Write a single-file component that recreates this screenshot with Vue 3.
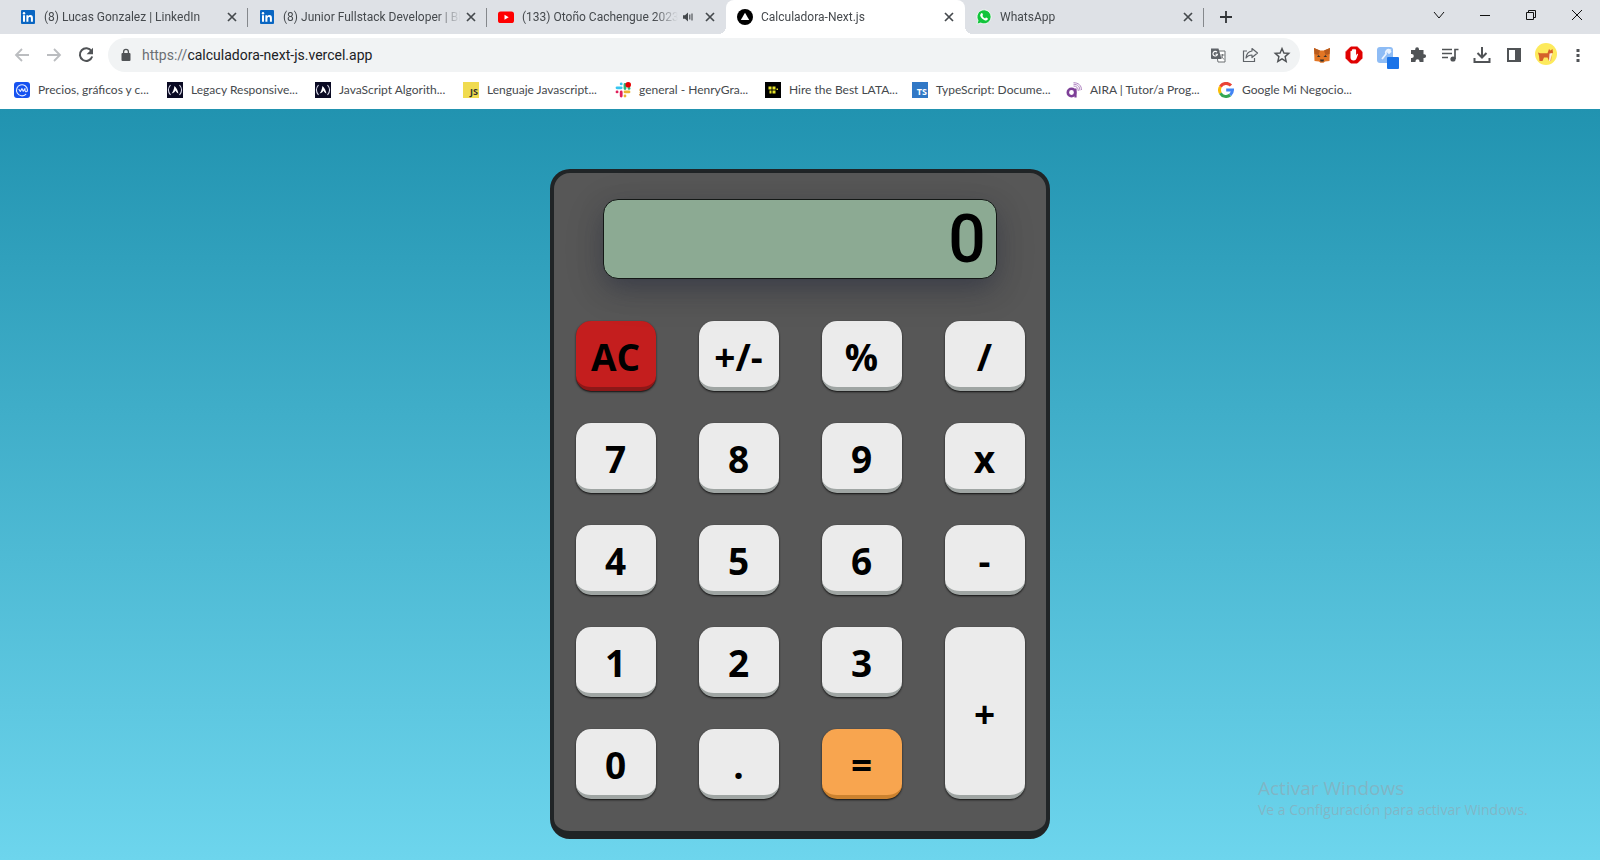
<script setup>
import { ref } from 'vue'

const tabs = [
  { icon: 'linkedin', title: '(8) Lucas Gonzalez | LinkedIn' },
  { icon: 'linkedin', title: '(8) Junior Fullstack Developer | Bl' },
  { icon: 'youtube', title: '(133) Otoño Cachengue 2023', audio: true },
  { icon: 'vercel', title: 'Calculadora-Next.js', active: true },
  { icon: 'whatsapp', title: 'WhatsApp' },
]

const bookmarks = [
  { icon: 'coinmarket', title: 'Precios, gráficos y c...' },
  { icon: 'fcc', title: 'Legacy Responsive...' },
  { icon: 'fcc', title: 'JavaScript Algorith...' },
  { badge: 'JS', title: 'Lenguaje Javascript...' },
  { icon: 'slack', title: 'general - HenryGra...' },
  { icon: 'hire', title: 'Hire the Best LATA...' },
  { badge: 'TS', title: 'TypeScript: Docume...' },
  { icon: 'aira', title: 'AIRA | Tutor/a Prog...' },
  { icon: 'google', title: 'Google Mi Negocio...' },
]

const keys = ['AC', '+/-', '%', '/', '7', '8', '9', 'x', '4', '5', '6', '-', '1', '2', '3', '+', '0', '.', '=']
const keyClass = { AC: 'clear', '+': 'plus', '=': 'equals' }

const display = ref('0')
const address = ref('calculadora-next-js.vercel.app')
let stored = null
let pending = null
let fresh = true

function compute(a, b, op) {
  if (op === '+') return a + b
  if (op === '-') return a - b
  if (op === 'x') return a * b
  return a / b
}

function press(key) {
  const value = Number(display.value)
  if (/^[0-9]$/.test(key)) {
    display.value = fresh || display.value === '0' ? key : (display.value + key).slice(0, 9)
    fresh = false
  } else if (key === '.') {
    if (fresh) display.value = '0.'
    else if (!display.value.includes('.')) display.value += '.'
    fresh = false
  } else if (key === 'AC') {
    display.value = '0'
    stored = pending = null
    fresh = true
  } else if (key === '+/-') {
    display.value = String(-value)
  } else if (key === '%') {
    display.value = String(value / 100).slice(0, 9)
  } else {
    const result = pending ? compute(stored, value, pending) : value
    display.value = String(result).slice(0, 9)
    stored = result
    pending = key === '=' ? null : key
    fresh = true
  }
}
</script>

<template>
  <div class="window">
    <svg class="symbols" aria-hidden="true">
      <symbol id="linkedin" viewBox="0 0 16 16">
        <rect x="1" y="1" width="14" height="14" rx="1" fill="#0a66c2" />
        <path d="M3 6.3h2v6.5H3zM6.4 6.3h1.9v.9c.4-.7 1.1-1.1 2-1.1 2 0 2.6 1.2 2.6 3v3.7h-2V9.5c0-.9-.2-1.6-1.1-1.6-1 0-1.4.7-1.4 1.6v3.3h-2z" fill="#fff" />
        <circle cx="4" cy="4.2" r="1.2" fill="#fff" />
      </symbol>
      <symbol id="youtube" viewBox="0 0 16 16">
        <rect x="0" y="2.5" width="16" height="11.5" rx="2.6" fill="#f00" />
        <path d="M6.5 5.8v4.9l4.2-2.45z" fill="#fff" />
      </symbol>
      <symbol id="vercel" viewBox="0 0 16 16">
        <circle cx="8" cy="8" r="8" fill="#000" />
        <path d="M8 3.8l4.2 7.2H3.8z" fill="#fff" />
      </symbol>
      <symbol id="whatsapp" viewBox="0 0 16 16">
        <path d="M1 15.2l1-3.8A7 7 0 1 1 4.7 14z" fill="#12c43c" stroke="#fff" stroke-width=".8" />
        <path d="M5.4 4.3c.4-.4.8-.3 1 .1l.6 1.4c.1.4-.3.8-.6 1.2.6 1.2 1.5 2 2.7 2.5.4-.4.7-1 1.1-.9l1.4.7c.4.3.3.7.1 1.1-.5 1-1.6 1.3-2.6 1-2.5-.8-4.1-2.4-4.9-4.6-.2-.9.4-1.9 1.2-2.5z" fill="#fff" />
      </symbol>
      <symbol id="coinmarket" viewBox="0 0 16 16">
        <rect width="16" height="16" rx="3" fill="#1652f0" />
        <path d="M11.8 12.3A5.5 5.5 0 1 1 13.5 8c0 2.2-2.5 2.2-2.5.2V6.5L9.2 9.300 8 6.600 6.300 9.500 5 7.500" fill="none" stroke="#e6edff" stroke-width="1.1" stroke-linecap="round" stroke-linejoin="round" />
      </symbol>
      <symbol id="fcc" viewBox="0 0 16 16">
        <rect width="16" height="16" fill="#0a0a23" />
        <path d="M3.5 3C1 6 1 10 3.5 13M12.5 3C15 6 15 10 12.5 13" fill="none" stroke="#d8d8e8" stroke-width="1.1" />
        <path d="M4.6 11.5C6.2 9.5 7 7 7.4 4c2.2 1.8 3.4 4.5 4 7.5-1.4-.5-2.4-1.6-2.9-3-.6 1.6-2 2.6-3.9 3z" fill="#fff" />
      </symbol>
      <symbol id="slack" viewBox="0 0 16 16">
        <g fill="none" stroke-width="2.8" stroke-linecap="round">
          <path d="M6.2 1.8v.1M2 5.8h4.2" stroke="#36c5f0" />
          <path d="M10 2.5v4M14 6.4h.1" stroke="#2eb67d" />
          <path d="M2 9.9h.1M6.2 10v4" stroke="#e01e5a" />
          <path d="M10 9.9h4M10 14v.1" stroke="#ecb22e" />
        </g>
        <circle cx="13.2" cy="2.8" r="2.8" fill="#e60000" />
      </symbol>
      <symbol id="hire" viewBox="0 0 16 16">
        <rect width="16" height="16" fill="#000" />
        <path d="M3.5 4.5h3v3h-3zM7.5 4.5h3v3h-3zM4.5 8.5h2v3h-2zM7.5 8.5h3v3h-3zM11.5 6.500h1.500v1.500h-1.500z" fill="#e8e52a" />
      </symbol>
      <symbol id="aira" viewBox="0 0 16 16">
        <circle cx="5.5" cy="10.5" r="3.7" fill="none" stroke="#7d3f98" stroke-width="2.6" />
        <path d="M9.500 6.500V15.500" stroke="#7d3f98" stroke-width="2.200" />
        <path d="M7.500 4c3 0 4.800 1.800 4.800 5M7.500 2.300c4.200 0 6.400 2.300 6.400 6.200M7.500.7c5 0 8 2.800 8 7.300" fill="none" stroke="#a06bb5" stroke-width=".8" />
      </symbol>
      <symbol id="google" viewBox="0 0 16 16">
        <g fill="none" stroke-width="3">
          <path d="M13 3.600A6.500 6.500 0 0 0 2.400 4.800" stroke="#ea4335" />
          <path d="M2.400 4.800a6.500 6.500 0 0 0 0 6.400" stroke="#fbbc05" />
          <path d="M2.400 11.200A6.500 6.500 0 0 0 12.200 13" stroke="#34a853" />
          <path d="M12.200 13A6.500 6.500 0 0 0 14.500 8H8.200" stroke="#4285f4" />
        </g>
      </symbol>
      <symbol id="close" viewBox="0 0 16 16">
        <path d="M4 4l8 8M12 4l-8 8" stroke="#45494d" stroke-width="1.700" />
      </symbol>
    </svg>

    <header class="tabstrip">
      <div v-for="(tab, i) in tabs" :key="i" class="tab" :class="{ active: tab.active, divided: [0, 1, 4].includes(i) }">
        <svg class="fav"><use :href="'#' + tab.icon" /></svg>
        <span class="tab-title">{{ tab.title }}</span>
        <svg v-if="tab.audio" class="audio" viewBox="0 0 12 12">
          <path d="M1 4.200h2L6 1.500v9L3 7.800H1z" fill="#45494d" />
          <path d="M7.800 3.500v5M10 2.500v7" stroke="#45494d" stroke-width="1.100" />
        </svg>
        <button class="tab-close" aria-label="Cerrar pestaña"><svg><use href="#close" /></svg></button>
      </div>
      <button class="new-tab" aria-label="Nueva pestaña">
        <svg viewBox="0 0 16 16"><path d="M8 2v12M2 8h12" stroke="#303336" stroke-width="1.800" /></svg>
      </button>
      <div class="controls">
        <button aria-label="Buscar pestañas"><svg viewBox="0 0 16 16"><path d="M3 5l5 6 5-6" /></svg></button>
        <button aria-label="Minimizar"><svg viewBox="0 0 16 16"><path d="M3 8.500h10" /></svg></button>
        <button aria-label="Restaurar"><svg viewBox="0 0 16 16"><path d="M3.500 5.500h7v7h-7zM5.500 5.500v-2h7v7h-2" /></svg></button>
        <button aria-label="Cerrar"><svg viewBox="0 0 16 16"><path d="M3 3l10 10M13 3L3 13" /></svg></button>
      </div>
    </header>

    <nav class="toolbar">
      <button class="tool" aria-label="Atrás">
        <svg viewBox="0 0 20 20"><path d="M17 10H4M10 4l-6 6 6 6" fill="none" stroke="#bbbdc0" stroke-width="1.800" /></svg>
      </button>
      <button class="tool" aria-label="Adelante">
        <svg viewBox="0 0 20 20"><path d="M3 10h13M10 4l6 6-6 6" fill="none" stroke="#bbbdc0" stroke-width="1.800" /></svg>
      </button>
      <button class="tool" aria-label="Recargar">
        <svg viewBox="0 0 20 20">
          <path d="M15.500 6.200A6.300 6.300 0 1 0 16.200 11.500" fill="none" stroke="#505356" stroke-width="2" />
          <path d="M17 2.800v6.400h-6.400z" fill="#505356" />
        </svg>
      </button>
      <div class="omnibox">
        <svg class="lock" viewBox="0 0 12 14">
          <rect x="1.500" y="5" width="9" height="8" rx="1" fill="#505356" />
          <path d="M3.600 5.500V3.800a2.400 2.400 0 0 1 4.800 0v1.700" fill="none" stroke="#505356" stroke-width="1.300" />
        </svg>
        <label class="scheme" for="address">https://</label>
        <input id="address" v-model="address" type="text" spellcheck="false" />
        <button class="tool" aria-label="Traducir">
          <svg viewBox="0 0 20 20">
            <path d="M8 6h9v11h-7z" fill="#fff" stroke="#6b6e71" stroke-width="1" />
            <path d="M3 3.500h7.500l3 10.500H4a1 1 0 0 1-1-1z" fill="#5f6368" />
            <path d="M9 7.200a2.300 2.300 0 1 0 .5 2H7.500" fill="none" stroke="#fff" stroke-width="1.100" />
            <path d="M12.500 10h4M14.500 9v1c0 1.500-.6 2.500-1.500 3.500M13.500 11.500l2.500 3" fill="none" stroke="#6b6e71" stroke-width=".9" />
          </svg>
        </button>
        <button class="tool" aria-label="Compartir">
          <svg viewBox="0 0 20 20">
            <path d="M7 6H3.500v10.500h11V13" fill="none" stroke="#5f6368" stroke-width="1.200" />
            <path d="M12 3.500L17.500 8 12 12.500V10c-2.500 0-4.500.8-6 3 .3-3.500 2.500-6.500 6-7z" fill="none" stroke="#5f6368" stroke-width="1.200" stroke-linejoin="round" />
          </svg>
        </button>
        <button class="tool" aria-label="Agregar a favoritos">
          <svg viewBox="0 0 20 20"><path d="M10 3.500l1.900 4.500 4.900.4-3.700 3.200 1.100 4.800L10 13.800l-4.200 2.600 1.100-4.800-3.700-3.200 4.900-.4z" fill="none" stroke="#505356" stroke-width="1.400" /></svg>
        </button>
      </div>
      <div class="extensions">
        <button class="tool" aria-label="MetaMask">
          <svg viewBox="0 0 20 20">
            <path d="M2 3l6 2.500h4L18 3l-.5 13-4.500.5-1.500 1.200h-3L7 16.500 2.500 16z" fill="#e27625" />
            <path d="M2 3l6 2.500L6.500 10 2.500 9zM18 3l-6 2.500 1.500 4.500 4-1z" fill="#b85a1c" />
            <path d="M6.500 10L8.500 12H5zM13.500 10l-2 2H15zM8 14.500h4l-.5 2h-3z" fill="#33302e" />
          </svg>
        </button>
        <button class="tool" aria-label="Bloqueador de anuncios">
          <svg viewBox="0 0 20 20">
            <path d="M6.700 2h6.600L18 6.700v6.600L13.300 18H6.700L2 13.300V6.700z" fill="#e00000" stroke="#e00000" stroke-linejoin="round" />
            <path d="M6.500 10V6.500a.7.7 0 0 1 1.400 0V5a.7.7 0 0 1 1.400 0v-.6a.7.7 0 0 1 1.400 0V5a.7.7 0 0 1 1.400 0v5.500l.8-1.500c.6-.6 1.300-.2 1.100.5l-1.500 4c-.5 1.300-1.300 2-2.800 2-2 0-3.200-1.200-3.200-3z" fill="#fff" />
          </svg>
        </button>
        <button class="tool" aria-label="Extensión">
          <svg class="large" viewBox="0 0 24 24">
            <rect x="3" y="4" width="16" height="16" rx="3" fill="#8ebcf5" />
            <path d="M8 16l4-5a3 3 0 0 1 4-4l-2 2 1 1 2-2" fill="none" stroke="#e8f2ff" stroke-width="1.800" />
            <rect x="13" y="14" width="12" height="12" rx="1" fill="#1a73e8" />
          </svg>
        </button>
        <button class="tool" aria-label="Extensiones">
          <svg viewBox="0 0 20 20"><path d="M3 5h4.200v-.8a1.900 1.900 0 0 1 3.800 0V5h4.500v4.200h.7a1.900 1.900 0 0 1 0 3.800h-.7v4h-4v-.7a2 2 0 0 0-4 0v.7H3v-4h.8a2 2 0 0 0 0-4H3z" fill="#505356" /></svg>
        </button>
        <button class="tool" aria-label="Controles multimedia">
          <svg viewBox="0 0 20 20">
            <path d="M2 4.500h10M2 8.500h10M2 12.500h6M15 14V4.500h3.500" fill="none" stroke="#505356" stroke-width="1.700" />
            <circle cx="13" cy="14" r="2.600" fill="#505356" />
          </svg>
        </button>
        <button class="tool" aria-label="Descargas">
          <svg viewBox="0 0 20 20"><path d="M10 2v10M5.500 8l4.500 4.500L14.500 8M2.500 13v4h15v-4" fill="none" stroke="#505356" stroke-width="2" /></svg>
        </button>
        <button class="tool" aria-label="Panel lateral">
          <svg viewBox="0 0 20 20"><path d="M4 4h12v12H4z" fill="none" stroke="#505356" stroke-width="2" /><path d="M11 4h5v12h-5z" fill="#505356" /></svg>
        </button>
        <button class="tool" aria-label="Perfil">
          <svg class="large" viewBox="0 0 24 24">
            <circle cx="12" cy="11" r="11" fill="#fdea5c" />
            <path d="M4 9.500l2 .8h7.500L15 6l1.500 1.500L18.500 6l.5 3.500-1.500 2.500-.5 6h-2l-1.500-3.500H10L8.500 18h-3l-.5-5z" fill="#d5622a" />
            <path d="M15.500 10.500l3-.5-1.500 4.500-.5 3.500H15z" fill="#fff0dd" />
          </svg>
        </button>
        <button class="tool" aria-label="Menú">
          <svg viewBox="0 0 20 20"><path d="M8.500 4h3v3h-3zM8.500 9h3v3h-3zM8.500 14h3v3h-3z" fill="#505356" /></svg>
        </button>
      </div>
    </nav>

    <nav class="bookmarks">
      <a v-for="(mark, i) in bookmarks" :key="i" href="#">
        <span v-if="mark.badge" class="badge" :class="mark.badge.toLowerCase()">{{ mark.badge }}</span>
        <svg v-else class="fav"><use :href="'#' + mark.icon" /></svg>
        <span>{{ mark.title }}</span>
      </a>
    </nav>

    <main class="page">
      <section class="calculator">
        <output class="screen">{{ display }}</output>
        <div class="keypad">
          <button v-for="key in keys" :key="key" class="key" :class="keyClass[key]" @click="press(key)">{{ key }}</button>
        </div>
      </section>
      <aside class="watermark">
        <p class="headline">Activar Windows</p>
        <p>Ve a Configuración para activar Windows.</p>
      </aside>
    </main>
  </div>
</template>

<style>
body {
  margin: 0;
}
</style>

<style scoped>
.window {
  display: flex;
  flex-direction: column;
  min-height: 100vh;
  font: 12px/16px Roboto, "Open Sans", sans-serif;
  color: #45494d;
}

.symbols {
  position: absolute;
  width: 0;
  height: 0;
}

button {
  display: flex;
  align-items: center;
  justify-content: center;
  padding: 0;
  border: 0;
  background: none;
  font: inherit;
  color: inherit;
}

.fav {
  flex: none;
  width: 16px;
  height: 16px;
}

.tabstrip {
  display: flex;
  height: 34px;
  padding-left: 9px;
  background: #dee1e6;
}

.tab {
  display: flex;
  flex: 0 1 239px;
  align-items: center;
  box-sizing: border-box;
  min-width: 0;
  padding: 0 8px 0 11px;
  position: relative;
}

.tab.active {
  background: #fff;
  border-radius: 8px 8px 0 0;
}

.tab.active::before,
.tab.active::after {
  content: "";
  position: absolute;
  bottom: 0;
  width: 8px;
  height: 8px;
}

.tab.active::before {
  right: 100%;
  background: radial-gradient(circle at 0 0, transparent 8px, #fff 8px);
}

.tab.active::after {
  left: 100%;
  background: radial-gradient(circle at 100% 0, transparent 8px, #fff 8px);
}

.tab.divided::after {
  content: "";
  position: absolute;
  right: 0;
  top: 8px;
  width: 1px;
  height: 19px;
  background: #85888c;
}

.tab-title {
  flex: 1;
  margin-left: 8px;
  overflow: hidden;
  white-space: nowrap;
  mask-image: linear-gradient(to left, transparent, #000 24px);
}

.audio {
  flex: none;
  width: 12px;
  height: 12px;
  margin: 0 6px 0 4px;
}

.tab-close {
  flex: none;
  width: 16px;
  height: 16px;
  margin-left: 2px;
}

.tab-close svg {
  width: 16px;
  height: 16px;
}

.new-tab {
  width: 28px;
  margin-left: 8px;
}

.new-tab svg {
  width: 16px;
  height: 16px;
}

.controls {
  display: flex;
  margin-left: auto;
}

.controls button {
  width: 46px;
  height: 29px;
}

.controls svg {
  width: 16px;
  height: 16px;
  fill: none;
  stroke: #111;
}

.toolbar {
  display: flex;
  align-items: center;
  height: 42px;
  padding: 0 6px;
}

.tool {
  flex: none;
  width: 32px;
  height: 32px;
}

.tool svg {
  width: 20px;
  height: 20px;
}

.tool .large {
  width: 24px;
  height: 24px;
  overflow: visible;
}

.omnibox {
  display: flex;
  flex: 1;
  align-items: center;
  height: 34px;
  margin: 0 6px;
  padding: 0 2px 0 12px;
  border-radius: 17px;
  background: #f1f3f4;
  font-size: 14px;
}

.lock {
  flex: none;
  width: 12px;
  height: 14px;
  margin-right: 10px;
}

.scheme {
  color: #6b6f73;
}

.omnibox input {
  flex: 1;
  min-width: 0;
  padding: 0;
  border: 0;
  outline: 0;
  background: none;
  font: inherit;
  color: #202124;
}

.extensions {
  display: flex;
}

.bookmarks {
  display: grid;
  grid-template-columns: 153px 148px 148px 152px 150px 147px 154px 152px auto;
  height: 33px;
  padding: 0 14px;
  font-family: Lato, "Open Sans", sans-serif;
}

.bookmarks a {
  display: flex;
  align-items: center;
  gap: 8px;
  height: 28px;
  color: inherit;
  text-decoration: none;
  white-space: nowrap;
}

.badge {
  box-sizing: border-box;
  width: 16px;
  height: 16px;
  padding: 4px 1px 0 0;
  font: 700 9px/12px "Open Sans", sans-serif;
  text-align: right;
}

.js {
  background: #f0db4f;
  color: #323330;
}

.ts {
  background: #3178c6;
  color: #fff;
}

.page {
  display: flex;
  flex: 1;
  align-items: flex-start;
  justify-content: center;
  position: relative;
  padding: 60px 0 20px;
  background: linear-gradient(#2193b0, #6dd5ed);
}

.calculator {
  width: 492px;
  border: 4px solid #202426;
  border-bottom-width: 8px;
  border-radius: 20px;
  padding: 26px 0 16px;
  background: #575757;
}

.screen {
  display: flex;
  align-items: center;
  justify-content: flex-end;
  position: relative;
  z-index: 1;
  box-sizing: border-box;
  width: 80%;
  height: 80px;
  margin: 0 auto 26px;
  padding: 2px 10px 0 0;
  border: 1px solid #141816;
  border-radius: 15px;
  background: #8caa93;
  box-shadow: rgba(40, 45, 70, 0.5) 0 10px 24px -4px, rgba(0, 0, 0, 0.15) 0 10px 40px;
  font: 500 66px/76px Roboto, sans-serif;
  color: #000;
}

.keypad {
  display: grid;
  grid-template-columns: repeat(4, 1fr);
  grid-auto-rows: 70px;
  gap: 32px 0;
  justify-items: center;
  padding: 16px 0;
}

.key {
  box-sizing: border-box;
  width: 80px;
  height: 100%;
  padding-top: 6px;
  border-bottom: 4px solid #9fa5a3;
  border-radius: 15px;
  background: #ebebeb;
  box-shadow: 0 1px 2px #111;
  font: 700 37px/48px "Open Sans", "Noto Sans", sans-serif;
  color: #000;
}

.clear {
  border-bottom-color: #8c1818;
  background: #c41e1e;
}

.plus {
  grid-column: 4;
  grid-row: 4 / span 2;
}

.equals {
  border-bottom-color: #cc822f;
  background: #f8a54f;
}

.watermark {
  position: absolute;
  right: 68px;
  bottom: 40px;
  width: 274px;
  font: 14px/20px "Open Sans", "Noto Sans", sans-serif;
  color: rgba(145, 165, 175, 0.6);
}

.watermark p {
  margin: 0;
}

.watermark .headline {
  font-size: 19px;
  line-height: 24px;
}
</style>
